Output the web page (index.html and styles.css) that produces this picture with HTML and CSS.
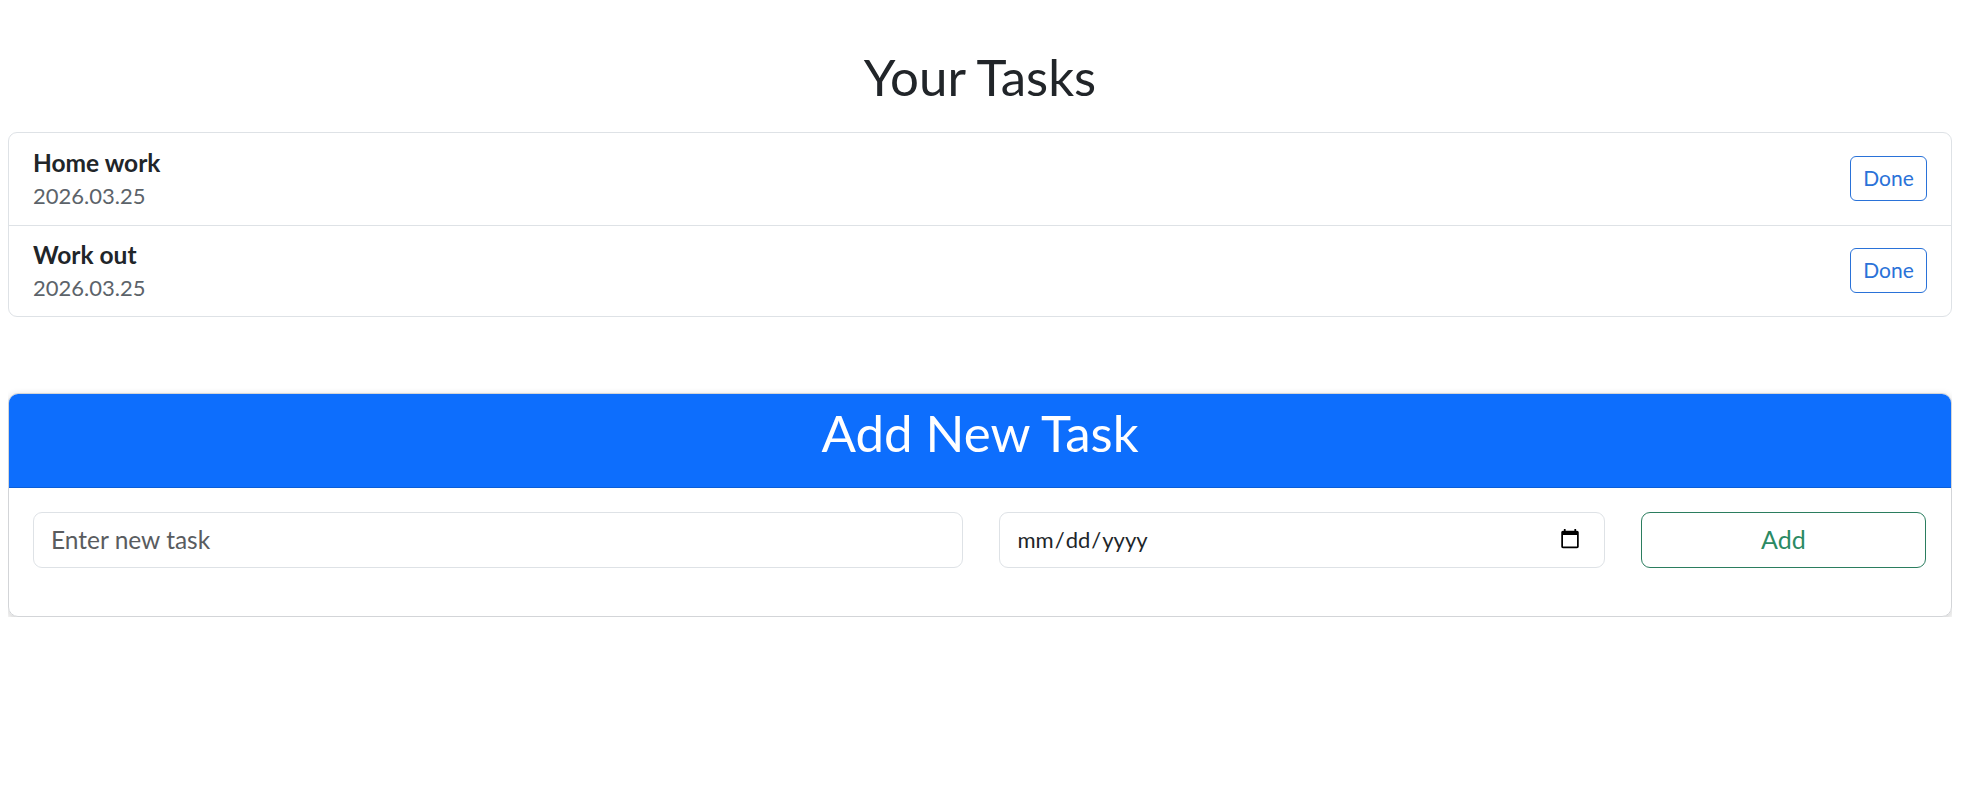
FILE: index.html
```html
<!DOCTYPE html>
<html lang="en">
<head>
  <meta charset="UTF-8">
  <title>Your Tasks</title>
  <link rel="stylesheet" href="styles.css">
</head>
<body>
  <h1 class="page-title">Your Tasks</h1>

  <ul class="task-list">
    <li class="task-item">
      <div>
        <div class="task-name">Home work</div>
        <div class="task-date">2026.03.25</div>
      </div>
      <button class="btn btn-done">Done</button>
    </li>
    <li class="task-item">
      <div>
        <div class="task-name">Work out</div>
        <div class="task-date">2026.03.25</div>
      </div>
      <button class="btn btn-done">Done</button>
    </li>
  </ul>

  <div class="add-card">
    <div class="add-header">Add New Task</div>
    <form class="add-form">
      <input class="field" type="text" placeholder="Enter new task">
      <input class="field field-date" type="date">
      <button type="button" class="btn btn-add">Add</button>
    </form>
  </div>
</body>
</html>
```

FILE: styles.css
```css
body {
  margin: 0 16px 0 8px;
  font-family: 'Lato', 'Noto Sans', sans-serif;
  font-size: 22px;
  color: #212529;
  background: #fff;
}

.page-title {
  margin: 0;
  padding-top: 46px;
  height: 132px;
  box-sizing: border-box;
  font-size: 51px;
  line-height: 62px;
  font-weight: 400;
  text-align: center;
}

.task-list {
  margin: 0;
  padding: 0;
  list-style: none;
  border: 1.25px solid #dee2e6;
  border-radius: 9px;
}

.task-item {
  display: flex;
  justify-content: space-between;
  align-items: center;
  height: 91.5px;
  box-sizing: border-box;
  padding: 0 24px;
}
.task-item + .task-item {
  border-top: 1.25px solid #dee2e6;
}

.task-name {
  font-size: 24.5px;
  font-weight: 700;
  line-height: 34px;
}
.task-date {
  color: #5c636a;
  line-height: 32px;
}

.btn {
  font-family: inherit;
  background: #fff;
  cursor: pointer;
  border-radius: 6px;
}
.btn-done {
  width: 77px;
  height: 45px;
  padding: 0 0 2px;
  font-size: 21px;
  color: #2a72d8;
  border: 1.25px solid #2a72d8;
}
.btn-add {
  height: 56px;
  padding: 0 0 2px;
  font-size: 25px;
  color: #2b8a64;
  border: 1.25px solid #2b7d5f;
  border-radius: 9px;
}

.add-card {
  margin-top: 76px;
  border: 1.25px solid #d3d5d8;
  border-radius: 10px;
  overflow: hidden;
  box-shadow: 0 3px 8px rgba(0, 0, 0, 0.2);
}

.add-header {
  height: 94px;
  box-sizing: border-box;
  background: #0d6efd;
  border-bottom: 1px solid #0b5ed7;
  color: #fff;
  font-size: 51px;
  line-height: 77px;
  text-align: center;
}

.add-form {
  display: grid;
  grid-template-columns: 929fr 606fr 285fr;
  gap: 36px;
  padding: 24px 25px 48px 24px;
}

.field {
  height: 56px;
  box-sizing: border-box;
  padding: 0 17px 2px;
  font-family: inherit;
  font-size: 24.5px;
  color: #212529;
  background: #fff;
  border: 1.25px solid #dee2e6;
  border-radius: 9px;
}
.field-date {
  padding-right: 21px;
  font-size: 22px;
}
.field::placeholder {
  color: #595c5f;
}
```
